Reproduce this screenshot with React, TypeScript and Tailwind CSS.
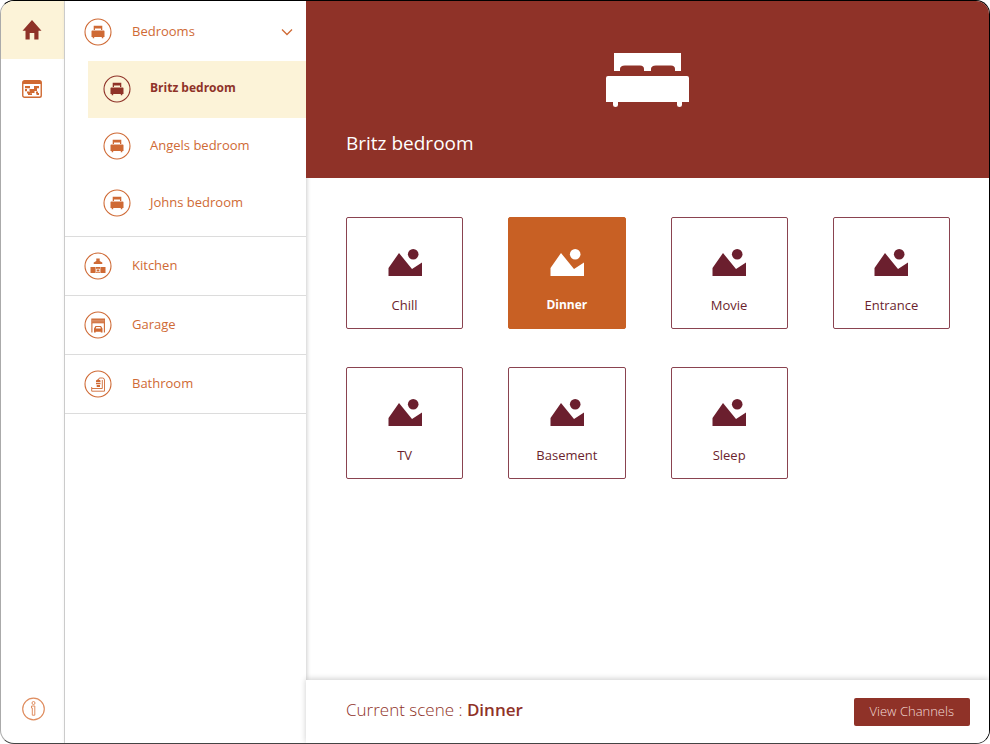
import type { ReactNode } from "react";

function BedShape() {
  return (
    <>
      <path d="M8 0H75V18H69V16Q69 12.500 65 12.500H50Q45 12.500 45 16V18H38V16Q38 12.500 34 12.500H19Q14 12.500 14 16V18H8Z" />
      <path d="M2 23H81Q83 23 83 25V49H76V52Q76 54 73.500 54T71 52V49H12V52Q12 54 9.500 54T7 52V49H0V25Q0 23 2 23Z" />
    </>
  );
}

function Badge({ children }: { children: ReactNode }) {
  return (
    <svg className="size-7 shrink-0" viewBox="0 0 28 28" fill="currentColor" aria-hidden="true">
      <circle cx="14" cy="14" r="13" fill="none" stroke="currentColor" strokeWidth="1.100" />
      {children}
    </svg>
  );
}

function BedIcon() {
  return (
    <Badge>
      <path d="M9.700 7.800H18.300V12H17V10.600H11V12H9.700Z" />
      <path d="M8.200 12.500H19.800Q20.500 12.500 20.500 13.200V19H19.300V20.200H17.800V19H10.200V20.200H8.700V19H7.500V13.200Q7.500 12.500 8.200 12.500Z" />
    </Badge>
  );
}

function KitchenIcon() {
  return (
    <Badge>
      <path d="M12.300 6.500H15.700V9L18.300 10.500V12H9.700V10.500L12.300 9Z" />
      <path d="M6.500 15H11V21H6.500ZM17 15H21.500V21H17Z" />
      <path fillRule="evenodd" d="M11.400 15H16.600V21H11.400ZM12.200 16.700V20.200H15.800V16.700Z" />
      <circle cx="14" cy="18.400" r="1.200" />
    </Badge>
  );
}

function GarageIcon() {
  return (
    <Badge>
      <path d="M7.300 7.500H21V12.300H7.300Z" />
      <path d="M8 9.300H20.500M8 10.900H20.500" stroke="#fff" strokeWidth="0.300" />
      <path d="M7.900 12V21.500M20.400 12V21.500" stroke="currentColor" strokeWidth="1.100" />
      <path fillRule="evenodd" d="M11.500 15H17L18.500 17.500V21.500H16.800V20.700H11.700V21.500H10V17.500ZM12.300 15.900L11.700 17.400H16.900L16.300 15.900Z" />
    </Badge>
  );
}

function BathIcon() {
  return (
    <Badge>
      <path
        d="M7.700 17V21.200H20.500V10Q20.500 8 18.500 8H16Q14.500 8 14.500 9.500M8 18.500H18.300V10"
        fill="none"
        stroke="currentColor"
        strokeWidth="0.900"
      />
      <path d="M14.200 9L16.500 10.500V12H12V10.500ZM12 12.700H16.500V14.200H12ZM12.700 15H16V17H12.700Z" />
    </Badge>
  );
}

function SceneIcon() {
  return (
    <svg className="h-[27px] w-[34px]" viewBox="0 0 34 27" fill="currentColor" aria-hidden="true">
      <path d="M0.500 27V19L11 4L24 20L34 13.500V27Z" />
      <circle cx="25.200" cy="5.300" r="5.300" />
    </svg>
  );
}

const bedrooms = ["Britz bedroom", "Angels bedroom", "Johns bedroom"];
const rooms = [
  { name: "Kitchen", icon: <KitchenIcon /> },
  { name: "Garage", icon: <GarageIcon /> },
  { name: "Bathroom", icon: <BathIcon /> },
];
const scenes = ["Chill", "Dinner", "Movie", "Entrance", "TV", "Basement", "Sleep"];

export default function App() {
  return (
    <div className="bg-white font-['Open_Sans','Noto_Sans',sans-serif] text-[13px] leading-5">
      <div className="flex min-h-screen overflow-hidden rounded-[14px] border border-t-black border-r-black border-b-[#444] border-l-[#aaa]">
        <nav aria-label="Main" className="flex w-16 shrink-0 flex-col items-center border-r border-[#d6d6d6]">
          <button aria-label="Home" className="flex h-[58px] w-full items-center justify-center bg-[#fcf3d8] pr-[2px] text-[#8f3228]">
            <svg className="size-5" viewBox="0 0 20 20" fill="currentColor" aria-hidden="true">
              <path d="M10 0L19.500 10.700H16.500V19.500H12.300V13H7.700V19.500H3.500V10.700H0.500Z" />
            </svg>
          </button>
          <button aria-label="Schedule" className="flex h-[60px] w-full items-center justify-center pr-[2px] text-[#d06a32]">
            <svg className="h-[18px] w-5" viewBox="0 0 20 18" fill="currentColor" aria-hidden="true">
              <rect x="0.750" y="0.750" width="18.500" height="16.500" rx="1.800" fill="none" stroke="currentColor" strokeWidth="1.400" />
              <path d="M1 1H19V4H1Z" />
              <path d="M3 6H8V8.200H3ZM12 6H17V8.200H12ZM7.500 9H12V8H15V11H12.500V13H8V11H7.500ZM3 9H5V11.200H3ZM5 11.500H8V13.500H5ZM14 11.500H16V13H17V15H14.500V13.500H14ZM6 13.200H10V15H6Z" />
            </svg>
          </button>
          <button aria-label="Information" className="mt-auto mb-[22px] text-[#df8d5f]">
            <svg className="size-6" viewBox="0 0 24 24" fill="none" stroke="currentColor" aria-hidden="true">
              <circle cx="12.500" cy="12" r="10.800" strokeWidth="1.200" />
              <circle cx="12.500" cy="6" r="1.500" strokeWidth="1" />
              <path d="M10.500 9H13.800V18.200H11.300V11H10.500Z" strokeWidth="1" />
            </svg>
          </button>
        </nav>

        <aside className="w-[241px] shrink-0 text-[#cf6a35] shadow-[1px_0_4px_rgba(0,0,0,0.2)]">
          <div className="border-b border-[#dcdcdc] pb-1">
            <button aria-expanded="true" className="flex h-[60px] w-full items-center gap-5 pt-[2px] pr-[13px] pl-[19px] text-left">
              <BedIcon />
              <span className="flex-1 pb-[2px]">Bedrooms</span>
              <svg className="size-3" viewBox="0 0 12 12" fill="none" stroke="currentColor" strokeWidth="1.300" aria-hidden="true">
                <path d="M1 3.500L6 8.500L11 3.500" />
              </svg>
            </button>
            <ul className="pl-[23px]">
              {bedrooms.map((name, i) => (
                <li key={name}>
                  <button
                    className={
                      i === 0
                        ? "flex h-[57px] w-full items-center gap-[19px] bg-[#fcf3d8] pb-[2px] pl-[15px] text-left text-xs font-bold text-[#8f3228]"
                        : "flex h-[57px] w-full items-center gap-[19px] pb-[2px] pl-[15px] text-left"
                    }
                  >
                    <BedIcon />
                    <span className="pb-[2px]">{name}</span>
                  </button>
                </li>
              ))}
            </ul>
          </div>
          {rooms.map((room) => (
            <button
              key={room.name}
              className="flex h-[59px] w-full items-center gap-5 border-b border-[#dcdcdc] pl-[19px] text-left"
            >
              {room.icon}
              <span className="pb-[2px]">{room.name}</span>
            </button>
          ))}
        </aside>

        <main className="flex min-w-0 flex-1 flex-col">
          <header className="relative flex h-[177px] flex-col bg-[#8f3228] px-10 pt-[52px] text-white">
            <svg className="h-[54px] w-[83px] self-center" viewBox="0 0 83 54" fill="currentColor" aria-hidden="true">
              <BedShape />
            </svg>
            <h1 className="mt-5 text-[19px] leading-8">Britz bedroom</h1>
          </header>

          <section aria-label="Scenes" className="grid flex-1 grid-cols-4 content-start gap-x-[45px] gap-y-[38px] pt-[39px] pr-[39px] pl-10">
            {scenes.map((scene) => (
              <button
                key={scene}
                className={
                  scene === "Dinner"
                    ? "flex h-[112px] flex-col items-center rounded-[2px] border border-[#c86024] bg-[#c86024] pt-[31px] text-xs leading-5 font-bold text-white"
                    : "flex h-[112px] flex-col items-center rounded-[2px] border border-[#8a4350] pt-[31px] text-[#6b1f2e]"
                }
              >
                <SceneIcon />
                <span className="mt-[19px]">{scene}</span>
              </button>
            ))}
          </section>

          <footer className="relative flex h-[63px] items-center justify-between bg-white pr-[19px] pl-10 shadow-[0_-1px_6px_rgba(0,0,0,0.2)]">
            <p className="pb-1 text-[17px] leading-7 font-light text-[#8f3228]">
              Current scene : <strong className="font-semibold">Dinner</strong>
            </p>
            <button className="h-7 rounded-[2px] bg-[#8f3228] px-4 pb-[2px] font-light text-[#f3dcd8]">View Channels</button>
          </footer>
        </main>
      </div>
    </div>
  );
}
